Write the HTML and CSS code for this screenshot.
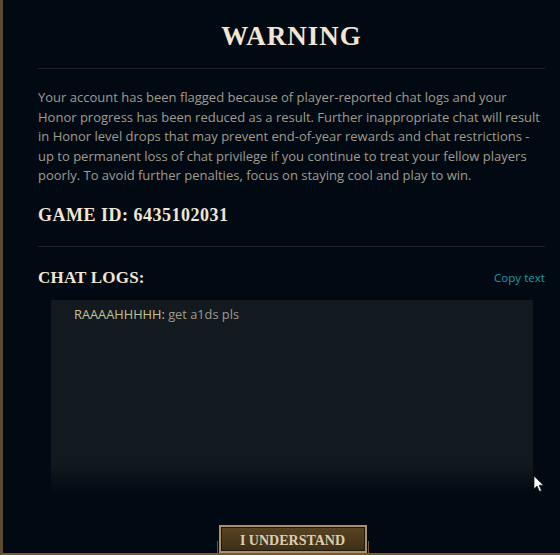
FILE: index.html
```html
<!DOCTYPE html>
<html lang="en">
<head>
    <meta charset="UTF-8">
    <meta name="viewport" content="width=device-width, initial-scale=1.0">
    <title>Warning</title>
    <link rel="stylesheet" href="styles.css">
</head>
<body>
    <div class="modal">
        <div class="content">
            <h1 class="title">WARNING</h1>
            <hr class="divider">
            <p class="message">Your account has been flagged because of player-reported chat logs and your Honor progress has been reduced as a result. Further inappropriate chat will result in Honor level drops that may prevent end-of-year rewards and chat restrictions - up to permanent loss of chat privilege if you continue to treat your fellow players poorly. To avoid further penalties, focus on staying cool and play to win.</p>
            <h2 class="game-id">GAME ID: 6435102031</h2>
            <hr class="divider">
            <div class="logs-header">
                <h2 class="logs-title">CHAT LOGS:</h2>
                <a class="copy-link" href="#">Copy text</a>
            </div>
            <div class="chat-box">
                <div class="chat-line"><span class="chat-name">RAAAAHHHHH:</span> get a1ds pls</div>
            </div>
        </div>
        <div class="footer">
            <span class="tick"></span>
            <button class="confirm">I UNDERSTAND</button>
            <span class="tick"></span>
        </div>

        <!-- mouse pointer from the capture -->
        <svg class="pointer" width="12" height="18" viewBox="0 0 12 18">
            <path d="M1 1 L1 14 L4 11 L6.5 16.5 L8.5 15.6 L6.2 10.3 L10.5 10.3 Z" fill="#fff" stroke="#222" stroke-width="0.8"/>
        </svg>
    </div>
</body>
</html>
```

FILE: styles.css
```css
html, body {
    margin: 0;
    height: 100%;
    background-color: #010a13;
}

body {
    font-family: "Open Sans", "Liberation Sans", Arial, sans-serif;
    overflow: hidden;
}

.modal {
    position: relative;
    box-sizing: border-box;
    height: 555px;
    border-left: 3px solid #5e4a33;
    border-bottom: 2px solid #785a28;
    background-color: #010a13;
    display: flex;
    flex-direction: column;
}

.content {
    padding: 20px 15px 0 35px;
}

.title {
    margin: 0;
    font-family: "Liberation Serif", "Times New Roman", serif;
    font-size: 27px;
    font-weight: bold;
    letter-spacing: 1px;
    line-height: 32px;
    text-align: center;
    color: #f0e6d2;
}

.divider {
    border: none;
    border-top: 1px solid #1e2328;
    margin: 0;
}

.title + .divider {
    margin-top: 16px;
}

.message {
    margin: 19px 0 0;
    font-size: 13px;
    line-height: 19.6px;
    color: #a09b8c;
}

.game-id {
    margin: 18px 0 20px;
    font-family: "Liberation Serif", "Times New Roman", serif;
    font-size: 18px;
    font-weight: bold;
    letter-spacing: 0.5px;
    line-height: 22px;
    color: #f0e6d2;
}

.logs-header {
    display: flex;
    justify-content: space-between;
    align-items: center;
    margin-top: 20px;
}

.logs-title {
    margin: 0;
    font-family: "Liberation Serif", "Times New Roman", serif;
    font-size: 17px;
    font-weight: bold;
    letter-spacing: 0.2px;
    line-height: 22px;
    color: #f0e6d2;
}

.copy-link {
    font-size: 11.6px;
    color: #1a9aab;
    text-decoration: none;
}

.chat-box {
    height: 182px;
    margin: 11px 12px 0 13px;
    padding: 5px 23px;
    border-radius: 2px;
    background: linear-gradient(to bottom, #131a1f 0%, #131a1f 84%, #020a12 100%);
    font-size: 12.8px;
    color: #a09b8c;
}

.chat-name {
    color: #c2c297;
}

.footer {
    margin-top: auto;
    display: flex;
    justify-content: center;
    align-items: flex-end;
    padding-left: 22px;
}

.tick {
    width: 1px;
    height: 12px;
    background-color: #6b5533;
    margin: 0 1px;
}

.confirm {
    width: 148px;
    height: 28px;
    padding: 3px 0 0;
    border: 2px solid #a89068;
    box-shadow: inset 0 0 0 1px #1e1a12;
    background: linear-gradient(to bottom, #5a4524, #3e2e17);
    font-family: "Liberation Serif", "Times New Roman", serif;
    font-size: 14px;
    font-weight: bold;
    letter-spacing: 0;
    color: #dccfae;
    cursor: pointer;
}

.pointer {
    position: absolute;
    left: 530px;
    top: 475px;
}
```
